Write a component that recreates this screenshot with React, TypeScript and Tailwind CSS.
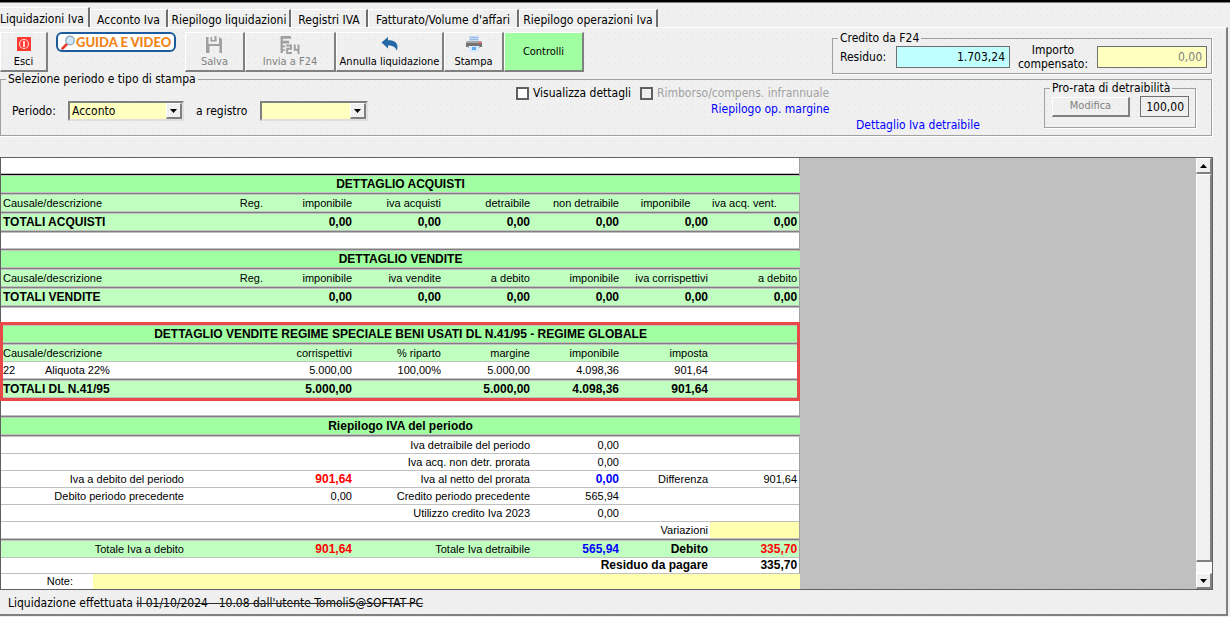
import React from "react";

type Cell = {
  text?: React.ReactNode;
  span?: number;
  align?: "l" | "c" | "r";
  bold?: boolean;
  tone?: "red" | "blue";
  fill?: boolean;
};

type Row = {
  bg?: "head" | "sub" | "plain";
  rule: "thin" | "thick" | "black";
  size: "sm" | "md" | "lg" | "xl";
  cells: Cell[];
};

const bgClass = { head: "bg-[#a0ffa0]", sub: "bg-[#c0ffc0]", plain: "bg-white" };
const sizeClass = { sm: "h-4", md: "h-[17px]", lg: "h-[18px]", xl: "h-[19px]" };
const ruleClass = {
  thin: "pb-[2px] shadow-[inset_0_-1px_0_#c0c0c0]",
  thick: "pb-1 shadow-[inset_0_-1px_0_#c0c0c0,inset_0_-2px_0_#808080,inset_0_-3px_0_#c0c0c0]",
  black: "pb-1 shadow-[inset_0_-1px_0_#c0c0c0,inset_0_-2px_0_#000000,inset_0_-3px_0_#c0c0c0]",
};
const alignClass = { l: "text-left", c: "text-center", r: "text-right" };
const toneClass = { red: "text-[#ff0000]", blue: "text-[#0000ff]" };

const spacer = (rule: Row["rule"] = "thick"): Row => ({ rule, size: "lg", cells: [{ span: 9 }] });
const title = (text: string): Row => ({
  bg: "head",
  rule: "thick",
  size: "xl",
  cells: [{ text, span: 9, align: "c", bold: true }],
});
const r = (text = "", extra: Partial<Cell> = {}): Cell => ({ text, align: "r", ...extra });
const b = (text = "", extra: Partial<Cell> = {}): Cell => ({ text, align: "r", bold: true, ...extra });
const label: Cell = { text: "Causale/descrizione", span: 2, align: "l" };
const zeros = Array.from({ length: 6 }, () => b("0,00"));

const sections: { marked?: boolean; rows: Row[] }[] = [
  {
    rows: [
      spacer("black"),
      title("DETTAGLIO ACQUISTI"),
      {
        bg: "sub",
        rule: "thick",
        size: "xl",
        cells: [
          label,
          r("Reg."),
          r("imponibile"),
          r("iva acquisti"),
          r("detraibile"),
          r("non detraibile"),
          { text: "imponibile", align: "c" },
          { text: "iva acq. vent.", align: "l" },
        ],
      },
      { bg: "sub", rule: "thick", size: "xl", cells: [{ text: "TOTALI ACQUISTI", span: 3, bold: true }, ...zeros] },
      spacer(),
      title("DETTAGLIO VENDITE"),
      {
        bg: "sub",
        rule: "thick",
        size: "xl",
        cells: [
          label,
          r("Reg."),
          r("imponibile"),
          r("iva vendite"),
          r("a debito"),
          r("imponibile"),
          r("iva corrispettivi"),
          r("a debito"),
        ],
      },
      { bg: "sub", rule: "thick", size: "xl", cells: [{ text: "TOTALI VENDITE", span: 3, bold: true }, ...zeros] },
      spacer(),
    ],
  },
  {
    marked: true,
    rows: [
      title("DETTAGLIO VENDITE REGIME SPECIALE BENI USATI DL N.41/95 - REGIME GLOBALE"),
      {
        bg: "sub",
        rule: "thin",
        size: "md",
        cells: [label, r(), r("corrispettivi"), r("% riparto"), r("margine"), r("imponibile"), r("imposta"), r()],
      },
      {
        rule: "thick",
        size: "xl",
        cells: [
          {
            text: (
              <span className="flex">
                <span className="w-[42px]">22</span>
                <span>Aliquota 22%</span>
              </span>
            ),
            span: 3,
          },
          r("5.000,00"),
          r("100,00%"),
          r("5.000,00"),
          r("4.098,36"),
          r("901,64"),
          r(),
        ],
      },
      {
        bg: "sub",
        rule: "thick",
        size: "xl",
        cells: [
          { text: "TOTALI DL N.41/95", span: 3, bold: true },
          b("5.000,00"),
          b(),
          b("5.000,00"),
          b("4.098,36"),
          b("901,64"),
          b(),
        ],
      },
    ],
  },
  {
    rows: [
      spacer(),
      title("Riepilogo IVA del periodo"),
      { rule: "thin", size: "md", cells: [{ span: 4 }, r("Iva detraibile del periodo", { span: 2 }), r("0,00"), r(), r()] },
      { rule: "thin", size: "md", cells: [{ span: 4 }, r("Iva acq. non detr. prorata", { span: 2 }), r("0,00"), r(), r()] },
      {
        rule: "thin",
        size: "md",
        cells: [
          r("Iva a debito del periodo", { span: 2 }),
          r(),
          b("901,64", { tone: "red" }),
          r("Iva al netto del prorata", { span: 2 }),
          b("0,00", { tone: "blue" }),
          r("Differenza"),
          r("901,64"),
        ],
      },
      {
        rule: "thin",
        size: "md",
        cells: [
          r("Debito periodo precedente", { span: 2 }),
          r(),
          r("0,00"),
          r("Credito periodo precedente", { span: 2 }),
          r("565,94"),
          r(),
          r(),
        ],
      },
      { rule: "thin", size: "md", cells: [{ span: 4 }, r("Utilizzo credito Iva 2023", { span: 2 }), r("0,00"), r(), r()] },
      { rule: "thick", size: "xl", cells: [{ span: 7 }, r("Variazioni"), { fill: true }] },
      {
        bg: "sub",
        rule: "thin",
        size: "md",
        cells: [
          r("Totale Iva a debito", { span: 2 }),
          r(),
          b("901,64", { tone: "red" }),
          r("Totale Iva detraibile", { span: 2 }),
          b("565,94", { tone: "blue" }),
          b("Debito"),
          b("335,70", { tone: "red" }),
        ],
      },
      { rule: "thin", size: "sm", cells: [{ span: 6 }, b("Residuo da pagare", { span: 2 }), b("335,70")] },
    ],
  },
];

function Report() {
  return (
    <table className="w-[799px] table-fixed border-separate border-spacing-0 bg-white font-['Liberation_Sans',Arial,sans-serif] text-[11px] leading-[14px] text-black">
      <colgroup>
        <col className="w-[92px]" />
        <col className="w-[93px]" />
        <col className="w-[79px]" />
        <col className="w-[89px]" />
        <col className="w-[89px]" />
        <col className="w-[89px]" />
        <col className="w-[89px]" />
        <col className="w-[89px]" />
        <col className="w-[90px]" />
      </colgroup>
      {sections.map((section, s) => (
        <tbody
          key={s}
          className={
            section.marked
              ? "relative after:pointer-events-none after:absolute after:-top-1 after:right-0 after:-bottom-px after:-left-px after:border-[3px] after:border-[#e84848] after:content-['']"
              : ""
          }
        >
          {section.rows.map((row, i) => (
            <tr key={i} className={`${sizeClass[row.size]} ${bgClass[row.bg ?? "plain"]}`}>
              {row.cells.map((c, j) => (
                <td
                  key={j}
                  colSpan={c.span ?? 1}
                  className={[
                    "overflow-hidden px-[2px] pt-0 align-middle whitespace-nowrap",
                    ruleClass[row.rule],
                    alignClass[c.align ?? "l"],
                    c.bold ? "text-xs leading-[14px] font-bold" : "",
                    c.tone ? toneClass[c.tone] : "",
                    c.fill ? "bg-[#ffffb0]" : "",
                    j === row.cells.length - 1 && row.bg !== "head" ? "border-r border-[#a0a0a0]" : "",
                  ].join(" ")}
                >
                  {c.text}
                </td>
              ))}
            </tr>
          ))}
        </tbody>
      ))}
      <tbody>
        <tr className="h-[15px]">
          <td className="py-0 pr-5 text-right leading-[15px]">
            <label htmlFor="note">Note:</label>
          </td>
          <td colSpan={8} className="bg-[#ffffb0] p-0">
            <input id="note" type="text" className="block h-[15px] w-full bg-transparent px-1 outline-none" />
          </td>
        </tr>
      </tbody>
    </table>
  );
}

const bevel = "border-t border-l border-r-2 border-b-2 border-t-white border-l-white border-r-[#808080] border-b-[#808080]";

function ToolButton({ icon, text, width, disabled }: { icon: React.ReactNode; text: string; width: string; disabled?: boolean }) {
  return (
    <button
      type="button"
      disabled={disabled}
      className={`flex h-10 shrink-0 flex-col items-center justify-between pt-[3px] text-[11px] leading-4 ${bevel} ${width} ${disabled ? "text-[#808080]" : "text-black"}`}
    >
      {icon}
      <span className="whitespace-nowrap">{text}</span>
    </button>
  );
}

const PowerIcon = () => (
  <svg width="16" height="16" viewBox="0 0 16 16">
    <rect x="1" y="1" width="14" height="14" fill="#ff3b30" />
    <circle cx="8" cy="8" r="4.5" fill="none" stroke="#ffd0cc" strokeWidth="1.2" />
    <path d="M8 5v6" stroke="#fff" strokeWidth="1.6" />
  </svg>
);

const SaveIcon = () => (
  <svg width="17" height="17" viewBox="0 0 17 17" fill="#a0a0a0">
    <path d="M0 1h2.500v7H13V1l3 2v14h-2.500v-7H3.500v7H0z" />
    <path d="M4.500 1h1.500v4H4.500zM8.500 0h2v5h-2z" />
    <path d="M4.500 4h6v1.500h-6z" />
  </svg>
);

const F24Icon = () => (
  <svg width="20" height="19" viewBox="0 0 20 19" fill="#a0a0a0">
    <path d="M0 0h11v3H2.500v2H9v3H2.500v2H5v2H2.500v2H5v1.500H2.500V18H0z" />
    <path d="M6 9h6v5.500H8V17h4v2H6v-6.500h4V11H6z" />
    <path d="M14 9h2v4.500h2V9h2v10h-2v-3.500h-4z" />
  </svg>
);

const UndoIcon = () => (
  <svg width="18" height="16" viewBox="0 0 18 16">
    <path d="M0.500 6.500 7 1v3.200C13 4 16.500 6.500 16.500 11c0 1.500-.3 2.700-1 4 0-3-2.500-5.500-8.500-5.500v3z" fill="#2468a4" />
  </svg>
);

const PrintIcon = () => (
  <svg width="18" height="17" viewBox="0 0 18 17">
    <path d="M4 0h10v5H4z" fill="#c4dcf8" />
    <path d="M5 1.500h8M5 3.500h8" stroke="#9cb8e0" />
    <path d="M2 5h14l1 1v2H1V6z" fill="#a8a8a8" />
    <path d="M1 7h16v4H1z" fill="#747474" />
    <path d="M14 6h2v1.500h-2z" fill="#ff5050" />
    <path d="M3 10h12v2H3z" fill="#b0b0b0" />
    <path d="M4 10h10v6H4z" fill="#d8ecff" />
    <path d="M7 11h4v3H7z" fill="#60a8f0" />
  </svg>
);

const LensIcon = () => (
  <svg width="15" height="15" viewBox="0 0 15 15" className="shrink-0">
    <path d="M1.500 13.500 6 9" stroke="#e83a30" strokeWidth="2.500" strokeLinecap="round" />
    <circle cx="9" cy="5.500" r="4.300" fill="#cfe8f8" stroke="#8aa4b8" strokeWidth="1.200" />
  </svg>
);

const fieldsetClass = "min-w-0 border border-[#a0a0a0] p-0 shadow-[1px_1px_0_#ffffff]";
const legendClass = "ml-[5px] px-[2px] text-xs leading-4";

function Combo({ id, width, options }: { id: string; width: string; options: string[] }) {
  return (
    <span className={`relative block h-5 border-2 border-t-[#808080] border-r-[#e0e0e0] border-b-[#e0e0e0] border-l-[#808080] bg-[#ffffc0] ${width}`}>
      <select id={id} className="block h-4 w-full appearance-none bg-transparent px-[2px] text-xs leading-4 outline-none">
        {options.map((o) => (
          <option key={o}>{o}</option>
        ))}
      </select>
      <span className={`pointer-events-none absolute top-0 right-0 flex h-4 w-4 items-center justify-center bg-[#f0f0f0] ${bevel}`}>
        <svg width="7" height="4" viewBox="0 0 7 4">
          <path d="M0 0h7L3.500 4z" />
        </svg>
      </span>
    </span>
  );
}

const tabs = [
  ["Liquidazioni Iva", "w-[90px]"],
  ["Acconto Iva", "w-[78px]"],
  ["Riepilogo liquidazioni", "w-[123px]"],
  ["Registri IVA", "w-[77px]"],
  ["Fatturato/Volume d'affari", "w-[151px]"],
  ["Riepilogo operazioni Iva", "w-[139px]"],
];

export default function App() {
  return (
    <div className="min-h-screen bg-[#f0f0f0] bg-[radial-gradient(#e6e6e6_0.6px,transparent_0.8px)] bg-size-[6px_6px] pb-px font-['DejaVu_Sans_Condensed','DejaVu_Sans',sans-serif] text-xs leading-4 text-black">
      <div className="h-[3px] border-t-2 border-b border-t-black border-b-[#808080]" />
      <nav className="flex h-6 items-end" role="tablist">
        {tabs.map(([name, width], i) => (
          <button
            key={name}
            type="button"
            role="tab"
            aria-selected={i === 0}
            className={`shrink-0 border-t border-r-2 border-t-white border-r-[#707070] leading-[14px] whitespace-nowrap ${width} ${i === 0 ? "h-5 pt-[2px] text-left" : "h-[18px] border-l border-l-white pt-[2px] text-center"}`}
          >
            {name}
          </button>
        ))}
      </nav>

      <main className="mr-[2px] border-t border-r-2 border-b-2 border-t-white border-r-[#808080] border-b-[#808080]">
        <header className="flex items-start pr-[14px]">
          <div className="flex pt-1">
            <ToolButton icon={<PowerIcon />} text="Esci" width="w-12" />
            <a
              href="#guida"
              className="mr-[9px] ml-2 flex h-5 w-[120px] shrink-0 items-center rounded-md border-2 border-[#1c5c9c] bg-white pl-[3px] font-[Lato,sans-serif] text-[13px] leading-4 font-black whitespace-nowrap text-[#f08418]"
            >
              <LensIcon />
              GUIDA E VIDEO
            </a>
            <ToolButton icon={<SaveIcon />} text="Salva" width="w-[60px]" disabled />
            <ToolButton icon={<F24Icon />} text="Invia a F24" width="w-[91px]" disabled />
            <ToolButton icon={<UndoIcon />} text="Annulla liquidazione" width="w-[108px]" />
            <ToolButton icon={<PrintIcon />} text="Stampa" width="w-[60px]" />
            <button type="button" className={`h-10 w-20 shrink-0 bg-[#a0ffa0] text-[11px] ${bevel}`}>
              Controlli
            </button>
          </div>
          <fieldset className={`mt-[2px] ml-auto h-11 w-[380px] shrink-0 ${fieldsetClass}`}>
            <legend className={legendClass}>Credito da F24</legend>
            <div className="-mt-[3px] flex items-center pl-[7px]">
              <label htmlFor="residuo" className="w-14">
                Residuo:
              </label>
              <input
                id="residuo"
                readOnly
                value="1.703,24"
                className="h-[22px] w-[114px] border border-[#707070] bg-[#c0ffff] px-1 text-right text-xs outline-none"
              />
              <label htmlFor="compensato" className="w-[87px] pr-px text-center leading-[14px]">
                Importo compensato:
              </label>
              <input
                id="compensato"
                disabled
                value="0,00"
                className="h-[22px] w-[110px] border border-[#707070] bg-[#ffffc0] px-1 text-right text-xs text-[#808080] outline-none"
              />
            </div>
          </fieldset>
        </header>

        <fieldset className={`-mt-[3px] mr-[14px] h-[65px] ${fieldsetClass}`}>
          <legend className={legendClass}>Selezione periodo e tipo di stampa</legend>
          <div className="-mt-[7px] flex items-start pr-[15px]">
            <div className="flex w-[515px] shrink-0 items-center pt-[21px] pl-[11px]">
              <label htmlFor="periodo" className="w-14">
                Periodo:
              </label>
              <Combo id="periodo" width="w-[116px]" options={["Acconto"]} />
              <label htmlFor="registro" className="w-[76px] pl-3">
                a registro
              </label>
              <Combo id="registro" width="w-[108px]" options={[""]} />
            </div>
            <div className="pt-[5px]">
              <div className="flex">
                <label className="flex w-[124px] items-center gap-1 whitespace-nowrap">
                  <input type="checkbox" className="size-[13px] appearance-none border-2 border-[#606060] bg-white checked:bg-[#606060]" />
                  Visualizza dettagli
                </label>
                <label className="flex items-center gap-1 whitespace-nowrap text-[#a0a0a0]">
                  <input type="checkbox" disabled className="size-[13px] appearance-none border-2 border-[#606060]" />
                  Rimborso/compens. infrannuale
                </label>
              </div>
              <a href="#margine" className="ml-[195px] block text-[#0000ff]">
                Riepilogo op. margine
              </a>
              <a href="#detraibile" className="ml-[340px] block text-[#0000ff]">
                Dettaglio Iva detraibile
              </a>
            </div>
            <fieldset className={`ml-auto h-12 w-[152px] shrink-0 ${fieldsetClass}`}>
              <legend className={legendClass}>Pro-rata di detraibilità</legend>
              <div className="flex items-center justify-between pr-[6px] pl-[7px]">
                <button type="button" disabled className={`h-5 w-[78px] text-[11px] leading-4 text-[#808080] ${bevel}`}>
                  Modifica
                </button>
                <input
                  aria-label="Pro-rata di detraibilità"
                  readOnly
                  value="100,00"
                  className="h-[21px] w-[49px] border border-[#707070] bg-transparent px-1 text-right text-xs outline-none"
                />
              </div>
            </fieldset>
          </div>
        </fieldset>

        <section className="mt-[21px] mr-[13px] flex border border-[#606060] bg-[#c0c0c0]">
          <div className="min-w-0 flex-1">
            <Report />
          </div>
          <div className="flex w-4 shrink-0 flex-col bg-[#f8f8f8]">
            <button type="button" aria-label="Scorri su" className={`flex h-4 items-center justify-center bg-[#f0f0f0] ${bevel}`}>
              <svg width="7" height="4" viewBox="0 0 7 4">
                <path d="M0 4h7L3.500 0z" />
              </svg>
            </button>
            <div className={`flex-1 bg-[#f0f0f0] ${bevel}`} />
            <div className="h-[11px]" />
            <button type="button" aria-label="Scorri giù" className={`flex h-4 items-center justify-center bg-[#f0f0f0] ${bevel}`}>
              <svg width="7" height="4" viewBox="0 0 7 4">
                <path d="M0 0h7L3.500 4z" />
              </svg>
            </button>
          </div>
        </section>

        <footer className="flex h-6 items-center pt-[2px] pl-2 whitespace-pre">
          Liquidazione effettuata <s className="decoration-[#303030]">il 01/10/2024 - 10.08 dall'utente TomoliS@SOFTAT-PC</s>
        </footer>
      </main>
    </div>
  );
}
